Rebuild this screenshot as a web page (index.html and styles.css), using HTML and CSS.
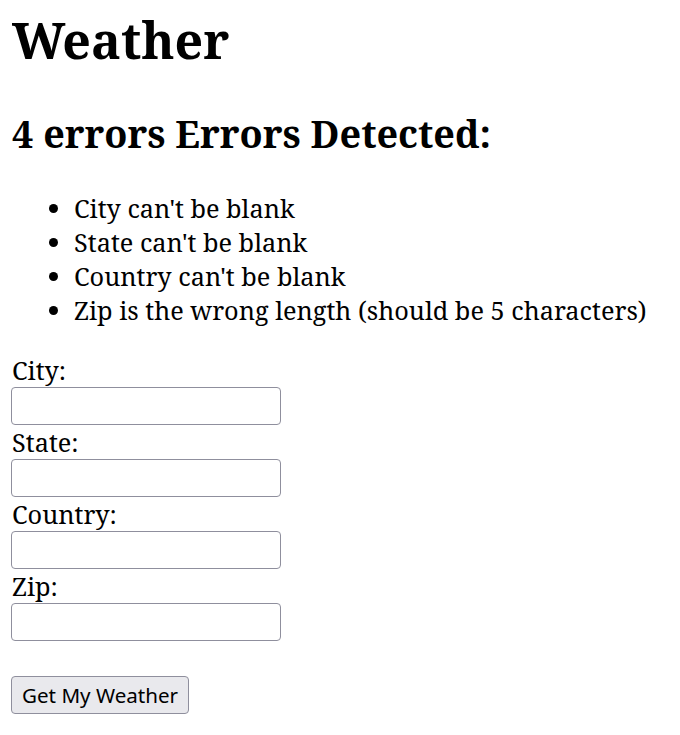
FILE: index.html
```html
<!DOCTYPE html>
<html>
<head>
<meta charset="utf-8">
<title>Weather</title>
<link rel="stylesheet" href="styles.css">
</head>
<body>
<h1 class="title">Weather</h1>
<div class="errors">
  <h2 class="errors-title">4 errors Errors Detected:</h2>
  <ul class="errors-list">
    <li>City can't be blank</li>
    <li>State can't be blank</li>
    <li>Country can't be blank</li>
    <li>Zip is the wrong length (should be 5 characters)</li>
  </ul>
</div>
<form class="form">
  <label class="field-label" for="city">City:</label>
  <input class="field-input" id="city" type="text">
  <label class="field-label" for="state">State:</label>
  <input class="field-input" id="state" type="text">
  <label class="field-label" for="country">Country:</label>
  <input class="field-input" id="country" type="text">
  <label class="field-label" for="zip">Zip:</label>
  <input class="field-input" id="zip" type="text">
  <button class="submit" type="submit">Get My Weather</button>
</form>
</body>
</html>
```
FILE: styles.css
```css
html, body {
  background: #ffffff;
}
body {
  margin: 0;
  padding: 0 12px;
  font-family: "Noto Serif", "DejaVu Serif", serif;
  font-size: 25.3px;
  line-height: 34px;
  color: #000000;
}
.title {
  margin: 0;
  padding-top: 8px;
  font-size: 50px;
  line-height: 65px;
  font-weight: bold;
}
.errors-title {
  margin: 36px 0 0;
  font-size: 37.8px;
  line-height: 49px;
  font-weight: bold;
}
.errors-list {
  margin: 33px 0 0;
  padding-left: 62px;
}
.errors-list li {
  line-height: 34px;
}
.form {
  display: flex;
  flex-direction: column;
  align-items: flex-start;
  margin-top: 26px;
}
.field-label {
  display: block;
  line-height: 34px;
}
.field-input {
  box-sizing: border-box;
  width: 270px;
  height: 38px;
  margin: 0 0 0 -1px;
  border: 1px solid #8f8f9d;
  border-radius: 4px;
  background: #ffffff;
  padding: 2px 4px;
  font-family: "Noto Sans", sans-serif;
  font-size: 20px;
}
.submit {
  box-sizing: border-box;
  margin: 35px 0 0 -1px;
  height: 38px;
  padding: 0 10px;
  border: 1px solid #8f8f9d;
  border-radius: 4px;
  background: #e9e9ed;
  color: #000000;
  font-family: "Noto Sans", sans-serif;
  font-size: 20.6px;
  line-height: 28px;
}
```
